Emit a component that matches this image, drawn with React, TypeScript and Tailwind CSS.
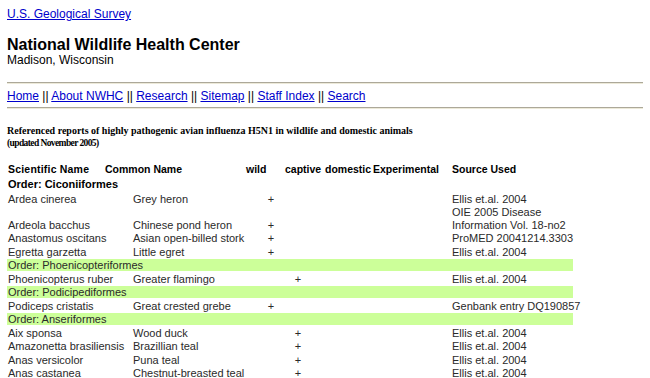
const rows: Array<
  | { kind: "order"; name: string; bold?: boolean }
  | { kind: "bird"; sci: string; common: string; wild?: boolean; captive?: boolean; source: string[] }
> = [
  { kind: "order", name: "Order: Ciconiiformes", bold: true },
  { kind: "bird", sci: "Ardea cinerea", common: "Grey heron", wild: true, source: ["Ellis et.al. 2004"] },
  { kind: "bird", sci: "Ardeola bacchus", common: "Chinese pond heron", wild: true, source: ["OIE 2005 Disease", "Information Vol. 18-no2"] },
  { kind: "bird", sci: "Anastomus oscitans", common: "Asian open-billed stork", wild: true, source: ["ProMED 20041214.3303"] },
  { kind: "bird", sci: "Egretta garzetta", common: "Little egret", wild: true, source: ["Ellis et.al. 2004"] },
  { kind: "order", name: "Order: Phoenicopteriformes" },
  { kind: "bird", sci: "Phoenicopterus ruber", common: "Greater flamingo", captive: true, source: ["Ellis et.al. 2004"] },
  { kind: "order", name: "Order: Podicipediformes" },
  { kind: "bird", sci: "Podiceps cristatis", common: "Great crested grebe", wild: true, source: ["Genbank entry DQ190857"] },
  { kind: "order", name: "Order: Anseriformes" },
  { kind: "bird", sci: "Aix sponsa", common: "Wood duck", captive: true, source: ["Ellis et.al. 2004"] },
  { kind: "bird", sci: "Amazonetta brasiliensis", common: "Brazillian teal", captive: true, source: ["Ellis et.al. 2004"] },
  { kind: "bird", sci: "Anas versicolor", common: "Puna teal", captive: true, source: ["Ellis et.al. 2004"] },
  { kind: "bird", sci: "Anas castanea", common: "Chestnut-breasted teal", captive: true, source: ["Ellis et.al. 2004"] },
];

const nav = ["Home", "About NWHC", "Research", "Sitemap", "Staff Index", "Search"];

function Rule() {
  return <div className="h-[2px] border-t border-[#aca899] border-b border-b-[#ece9d8]" />;
}

export default function App() {
  return (
    <div className="h-[378px] w-[650px] overflow-hidden bg-white px-[7px] font-['Liberation_Sans',Arial,sans-serif] text-black">
      <div className="pt-[7px] text-[12px] leading-[14px]">
        <a href="#" className="text-[#0000cc] underline">U.S. Geological Survey</a>
      </div>

      <h1 className="mt-[15px] text-[16px] font-bold leading-[18px]">National Wildlife Health Center</h1>
      <div className="text-[12px] leading-[13px]">Madison, Wisconsin</div>

      <div className="mt-[15px]">
        <Rule />
      </div>
      <div className="mt-[5px] text-[12px] leading-[14px]">
        {nav.map((item, i) => (
          <span key={item}>
            {i > 0 && " || "}
            <a href="#" className="text-[#0000cc] underline">{item}</a>
          </span>
        ))}
      </div>
      <div className="mt-[4px]">
        <Rule />
      </div>

      <div className="mt-[15px] font-['Liberation_Serif','Times_New_Roman',serif] text-[10px] font-bold leading-[13px]">
        <div>Referenced reports of highly pathogenic avian influenza H5N1 in wildlife and domestic animals</div>
        <div className="text-[9.5px] tracking-[-0.6px]">(updated November 2005)</div>
      </div>

      <div className="mt-[12px] w-[566px] text-[11px] text-[#2a2a2a]">
        <div className="flex h-[15px] items-center whitespace-nowrap pl-px text-[10.5px] font-bold text-black">
          <div className="w-[97px] shrink-0 tracking-[0.2px]">Scientific Name</div>
          <div className="w-[141px] shrink-0">Common Name</div>
          <div className="w-[39px] shrink-0">wild</div>
          <div className="w-[40px] shrink-0">captive</div>
          <div className="w-[48px] shrink-0">domestic</div>
          <div className="w-[79px] shrink-0">Experimental</div>
          <div>Source Used</div>
        </div>

        {rows.map((r, i) =>
          r.kind === "order" ? (
            r.bold ? (
              <div key={i} className="flex h-[15px] items-center pl-px font-bold text-black">
                {r.name}
              </div>
            ) : (
              <div key={i} className="flex h-[13.5px] items-center">
                <div className="h-[12px] w-full bg-[#ccff99] pl-px leading-[12px]">{r.name}</div>
              </div>
            )
          ) : (
            <div
              key={i}
              className="grid grid-cols-[125px_125px_26px_28px_140px_1fr] items-end whitespace-nowrap py-[0.5px] pl-px leading-[12.5px]"
            >
              <div>{r.sci}</div>
              <div>{r.common}</div>
              <div className="text-center">{r.wild ? "+" : ""}</div>
              <div className="text-center">{r.captive ? "+" : ""}</div>
              <div />
              <div>
                {r.source.map((s) => (
                  <div key={s}>{s}</div>
                ))}
              </div>
            </div>
          )
        )}
      </div>
    </div>
  );
}
